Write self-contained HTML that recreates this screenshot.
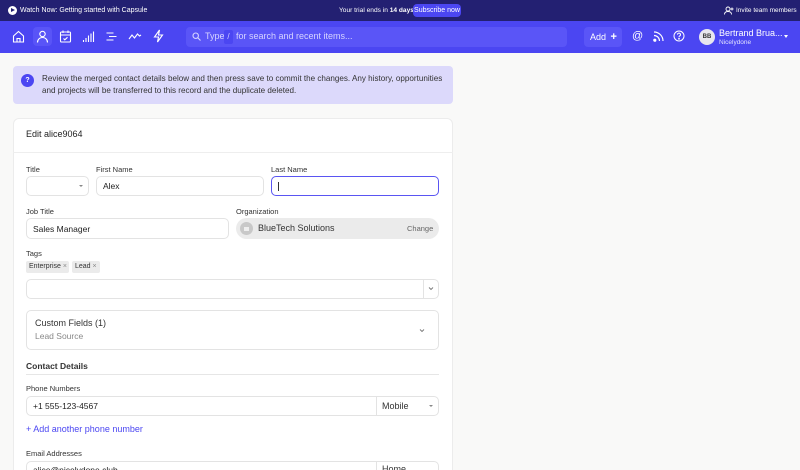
<!DOCTYPE html>
<html><head><style>
*{box-sizing:border-box;margin:0;padding:0}
html,body{width:800px;height:470px;overflow:hidden}
body{background:#f9f9f8;font-family:"Liberation Sans",sans-serif;color:#222;position:relative}
.a{position:absolute;white-space:nowrap}
.top{left:0;top:0;width:800px;height:21px;background:#232072;color:#fff;font-size:7px}
.nav{left:0;top:21px;width:800px;height:32px;background:#4b46f2}
.lbl{font-size:7.5px;color:#333}
.inp{background:#fff;border:1px solid #e3e3e3;border-radius:5px;font-size:8.5px;color:#222;display:flex;align-items:center;padding-left:6px}
svg{display:block}
</style></head><body>
<div class="a top">
 <div class="a" style="left:8px;top:6px;width:9px;height:9px;border-radius:50%;background:#fff"></div>
 <div class="a" style="left:11px;top:8px;width:0;height:0;border-left:4px solid #232072;border-top:2.5px solid transparent;border-bottom:2.5px solid transparent"></div>
 <div class="a" style="left:20px;top:7px">Watch Now: Getting started with Capsule</div>
 <div class="a" style="left:339px;top:7px;font-size:6.6px">Your trial ends in <b>14 days</b></div>
 <div class="a" style="left:413px;top:4px;width:48px;height:13px;background:#4b46f2;border-radius:4px;text-align:center;line-height:13px">Subscribe now</div>
 <svg class="a" style="left:724px;top:6px" width="10" height="9" viewBox="0 0 10 9" fill="none" stroke="#fff" stroke-width="0.9"><circle cx="4" cy="3" r="2"/><path d="M0.5 8.5c0-2 1.5-3 3.5-3s3.5 1 3.5 3M8 1.5v3M6.5 3h3"/></svg>
 <div class="a" style="left:736px;top:7px;font-size:6.5px">Invite team members</div>
</div>
<div class="a nav">
 <svg class="a" style="left:12px;top:9px" width="13" height="13" viewBox="0 0 13 13" fill="none" stroke="#fff" stroke-width="1.1"><path d="M1.5 6L6.5 1.5 11.5 6V12H1.5Z M5 12V8.5H8V12"/></svg>
 <div class="a" style="left:33px;top:6px;width:19px;height:19px;border-radius:4px;background:#5954f7"></div>
 <svg class="a" style="left:36px;top:9px" width="13" height="13" viewBox="0 0 13 13" fill="none" stroke="#fff" stroke-width="1.1"><circle cx="6.5" cy="4" r="2.7"/><path d="M1.5 12.5c0-3 2.2-5 5-5s5 2 5 5"/></svg>
 <svg class="a" style="left:59px;top:9px" width="13" height="13" viewBox="0 0 13 13" fill="none" stroke="#fff" stroke-width="1.1"><rect x="1.5" y="2" width="10" height="10" rx="1"/><path d="M1.5 5h10M4 0.5v2.5M9 0.5v2.5M4.5 8.5l1.3 1.3 2.7-2.5"/></svg>
 <svg class="a" style="left:82px;top:9px" width="13" height="13" viewBox="0 0 13 13" fill="none" stroke="#fff" stroke-width="1.1"><path d="M1.5 12v-2M4 12V8M6.5 12V5.5M9 12V3.5M11.5 12V1.5"/></svg>
 <svg class="a" style="left:105px;top:9px" width="13" height="13" viewBox="0 0 13 13" fill="none" stroke="#fff" stroke-width="1.1"><path d="M1.5 3h7M4 6.5h7.5M1.5 10h7"/></svg>
 <svg class="a" style="left:128px;top:9px" width="14" height="13" viewBox="0 0 14 13" fill="none" stroke="#fff" stroke-width="1.1"><path d="M1 9l3-4 2.5 3 3-4 2 2 1.5-1"/></svg>
 <svg class="a" style="left:152px;top:8px" width="13" height="14" viewBox="0 0 13 14" fill="none" stroke="#fff" stroke-width="1.1"><path d="M7.5 1L2.5 8h4l-1 5 5-7h-4z"/></svg>
 <div class="a" style="left:186px;top:6px;width:381px;height:20px;background:#5a55f7;border-radius:4px"></div>
 <svg class="a" style="left:192px;top:11px" width="9" height="9" viewBox="0 0 9 9" fill="none" stroke="#d6d4ff" stroke-width="1.1"><circle cx="3.7" cy="3.7" r="2.7"/><path d="M5.7 5.7l2.8 2.8"/></svg>
 <div class="a" style="left:205px;top:10px;font-size:9px;color:#d6d4ff">Type</div>
 <div class="a" style="left:224px;top:9px;width:9px;height:14px;background:#4b46f2;border-radius:2px;color:#d6d4ff;font-size:8px;text-align:center;line-height:14px">/</div>
 <div class="a" style="left:236px;top:10px;font-size:9px;color:#d6d4ff">for search and recent items...</div>
 <div class="a" style="left:584px;top:6px;width:38px;height:20px;background:#5a55f7;border-radius:4px;color:#fff;font-size:9px;line-height:20px;padding-left:6px">Add <b style="font-size:11px;margin-left:2px">+</b></div>
 <div class="a" style="left:632px;top:9px;color:#fff;font-size:11px">@</div>
 <svg class="a" style="left:653px;top:10px" width="11" height="11" viewBox="0 0 11 11" fill="none" stroke="#fff" stroke-width="1.2"><path d="M1 1a9 9 0 0 1 9 9M1 4.5a5.5 5.5 0 0 1 5.5 5.5"/><circle cx="1.8" cy="9.2" r="1" fill="#fff"/></svg>
 <svg class="a" style="left:673px;top:9px" width="12" height="12" viewBox="0 0 12 12" fill="none" stroke="#fff" stroke-width="1"><circle cx="6" cy="6" r="5"/><path d="M4.5 4.6a1.5 1.5 0 1 1 2 1.4c-.5.2-.5.6-.5 1.2"/><circle cx="6" cy="8.8" r=".4" fill="#fff"/></svg>
 <div class="a" style="left:699px;top:8px;width:16px;height:16px;border-radius:50%;background:#e8e6ee;color:#333;font-size:6px;font-weight:bold;text-align:center;line-height:16px">BB</div>
 <div class="a" style="left:719px;top:7px;color:#fff;font-size:9px">Bertrand Brua...</div>
 <div class="a" style="left:719px;top:18px;color:#e0e0ff;font-size:6.5px">Nicelydone</div>
 <div class="a" style="left:784px;top:14px;border-left:2.5px solid transparent;border-right:2.5px solid transparent;border-top:3px solid #fff"></div>
</div>

<div class="a" style="left:13px;top:66px;width:440px;height:38px;background:#dcd9fb;border-radius:4px"></div>
<div class="a" style="left:21px;top:74px;width:13px;height:13px;border-radius:50%;background:#4b46f2;color:#fff;font-size:7px;font-weight:bold;text-align:center;line-height:13px">?</div>
<div class="a" style="left:42px;top:73px;width:410px;font-size:8.1px;line-height:11.5px;color:#333;white-space:normal">Review the merged contact details below and then press save to commit the changes. Any history, opportunities and projects will be transferred to this record and the duplicate deleted.</div>

<div class="a" style="left:13px;top:118px;width:440px;height:360px;background:#fff;border:1px solid #ececec;border-radius:6px"></div>
<div class="a" style="left:13px;top:152px;width:440px;height:1px;background:#eee"></div>
<div class="a" style="left:26px;top:129px;font-size:9px;color:#222">Edit alice9064</div>

<div class="a lbl" style="left:26px;top:165px">Title</div>
<div class="a lbl" style="left:96px;top:165px">First Name</div>
<div class="a lbl" style="left:271px;top:165px">Last Name</div>
<div class="a inp" style="left:26px;top:176px;width:63px;height:20px"></div>
<div class="a" style="left:79px;top:185px;border-left:2px solid transparent;border-right:2px solid transparent;border-top:2.5px solid #888"></div>
<div class="a inp" style="left:96px;top:176px;width:168px;height:20px">Alex</div>
<div class="a inp" style="left:271px;top:176px;width:168px;height:20px;border:1.3px solid #5a55f2"><span style="width:1px;height:9px;background:#333"></span></div>

<div class="a lbl" style="left:26px;top:207px">Job Title</div>
<div class="a lbl" style="left:236px;top:207px">Organization</div>
<div class="a inp" style="left:26px;top:218px;width:203px;height:21px">Sales Manager</div>
<div class="a" style="left:236px;top:218px;width:203px;height:21px;background:#ebebeb;border-radius:11px"></div>
<div class="a" style="left:240px;top:222px;width:13px;height:13px;border-radius:50%;background:#c8c8c8"></div>
<div class="a" style="left:244px;top:227px;width:5px;height:4px;background:#eee"></div>
<div class="a" style="left:258px;top:223px;font-size:9px;color:#333">BlueTech Solutions</div>
<div class="a" style="left:407px;top:224px;font-size:7.5px;color:#666">Change</div>

<div class="a lbl" style="left:26px;top:249px">Tags</div>
<div class="a" style="left:26px;top:261px;width:43px;height:12px;background:#ebebeb;border-radius:2px;font-size:7px;line-height:12px;padding-left:3px;color:#333">Enterprise <span style="color:#888">×</span></div>
<div class="a" style="left:72px;top:261px;width:28px;height:12px;background:#ebebeb;border-radius:2px;font-size:7px;line-height:12px;padding-left:3px;color:#333">Lead <span style="color:#888">×</span></div>
<div class="a inp" style="left:26px;top:279px;width:413px;height:20px"></div>
<div class="a" style="left:423px;top:280px;width:1px;height:18px;background:#e3e3e3"></div>
<svg class="a" style="left:428px;top:286px" width="6" height="5" viewBox="0 0 6 5" fill="none" stroke="#777" stroke-width="0.9"><path d="M1 1.5l2 2 2-2"/></svg>

<div class="a" style="left:26px;top:310px;width:413px;height:40px;border:1px solid #e3e3e3;border-radius:5px"></div>
<div class="a" style="left:35px;top:318px;font-size:9px;color:#333">Custom Fields (1)</div>
<div class="a" style="left:35px;top:331px;font-size:8.5px;color:#888">Lead Source</div>
<svg class="a" style="left:419px;top:328px" width="6" height="5" viewBox="0 0 6 5" fill="none" stroke="#777" stroke-width="0.9"><path d="M1 1.5l2 2 2-2"/></svg>

<div class="a" style="left:26px;top:361px;font-size:8.5px;font-weight:bold;color:#333">Contact Details</div>
<div class="a" style="left:26px;top:374px;width:413px;height:1px;background:#e6e6e6"></div>
<div class="a lbl" style="left:26px;top:384px">Phone Numbers</div>
<div class="a inp" style="left:26px;top:396px;width:413px;height:20px">+1 555-123-4567</div>
<div class="a" style="left:376px;top:397px;width:1px;height:18px;background:#e3e3e3"></div>
<div class="a" style="left:382px;top:401px;font-size:9px;color:#333">Mobile</div>
<div class="a" style="left:429px;top:405px;border-left:2px solid transparent;border-right:2px solid transparent;border-top:2.5px solid #888"></div>
<div class="a" style="left:26px;top:424px;font-size:9px;color:#4b46f2">+ Add another phone number</div>
<div class="a lbl" style="left:26px;top:449px">Email Addresses</div>
<div class="a inp" style="left:26px;top:461px;width:413px;height:20px;align-items:flex-start;padding-top:3px">alice@nicelydone.club</div>
<div class="a" style="left:376px;top:462px;width:1px;height:18px;background:#e3e3e3"></div>
<div class="a" style="left:382px;top:464px;font-size:9px;color:#333">Home</div>
</body></html>
